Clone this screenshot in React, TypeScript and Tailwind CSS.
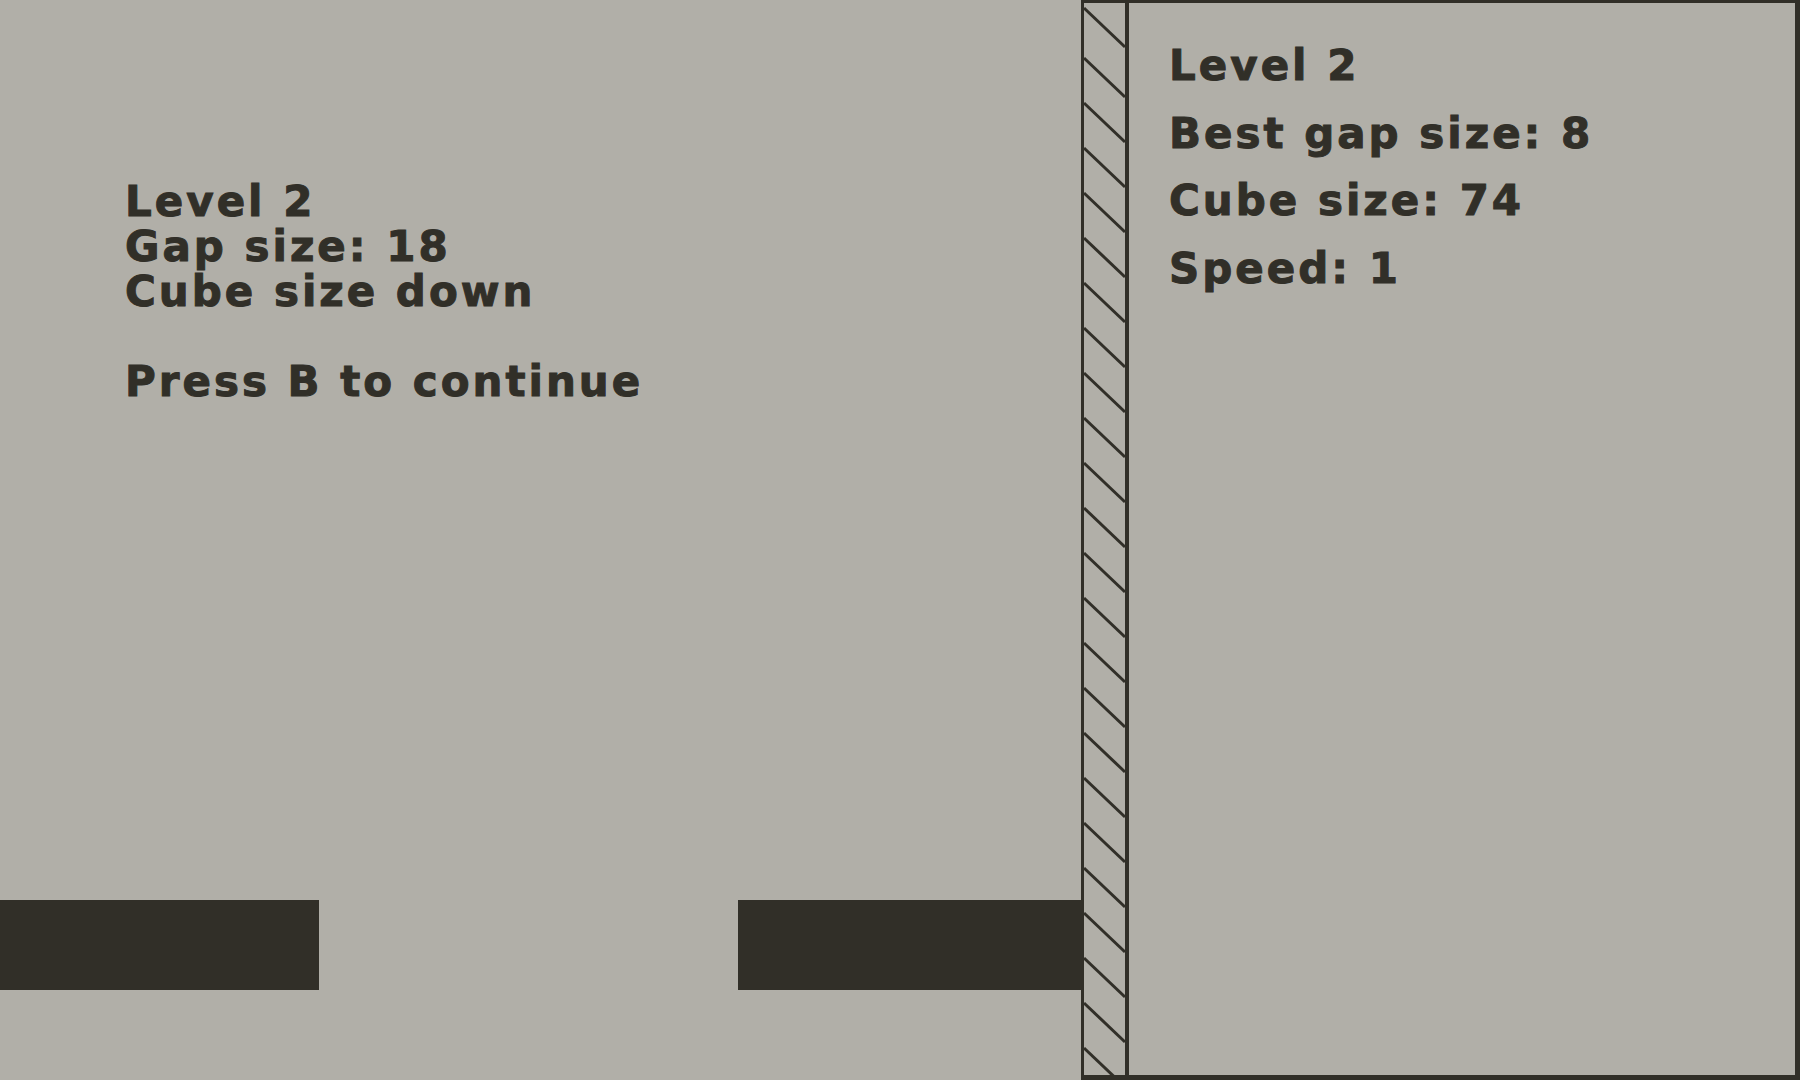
const INK = "#312f28";

const hud = [
  "Level 2",
  "Best gap size: 8",
  "Cube size: 74",
  "Speed: 1",
];

// diagonal stripes down the panel's edge strip; y where each stripe meets the left edge
const stripes = [5, ...Array.from({ length: 23 }, (_, i) => 55 + i * 45)];

function HatchStrip() {
  return (
    <div className="h-full w-[45px] shrink-0 border-r-[4px] border-[#312f28]">
      <svg width="41" height="1072" viewBox="0 0 41 1072" className="block">
        {stripes.map((y) => (
          <line
            key={y}
            x1="0"
            y1={y}
            x2="41"
            y2={y + 39}
            stroke={INK}
            strokeWidth="3"
          />
        ))}
      </svg>
    </div>
  );
}

export default function App() {
  return (
    <main
      className="flex h-[1080px] w-[1800px] overflow-hidden bg-[#b1afa8] text-[#312f28]"
      style={{ fontFamily: '"DejaVu Sans", sans-serif' }}
    >
      {/* ── Play field ── */}
      <section className="flex h-full w-[1081px] shrink-0 flex-col">
        <div className="pl-[125px] pt-[179px] text-[42px] font-bold leading-[45px] tracking-[3px] [-webkit-text-stroke:1px_#312f28]">
          <p>Level 2</p>
          <p>Gap size: 18</p>
          <p>Cube size down</p>
          <p className="mt-[45px]">Press B to continue</p>
        </div>

        {/* Floor with the gap */}
        <div className="mb-[90px] mt-auto flex h-[90px] justify-between">
          <div className="h-full w-[319px] bg-[#312f28]" />
          <div className="h-full w-[343px] bg-[#312f28]" />
        </div>
      </section>

      {/* ── Stats panel ── */}
      <aside className="flex h-full flex-1 border-b-[5px] border-l-[3px] border-r-[5px] border-t-[3px] border-[#312f28]">
        <HatchStrip />
        <div className="pl-[40px] pt-[29px] text-[42px] font-bold leading-[67.5px] tracking-[3px] [-webkit-text-stroke:1px_#312f28]">
          {hud.map((line) => (
            <p key={line}>{line}</p>
          ))}
        </div>
      </aside>
    </main>
  );
}
